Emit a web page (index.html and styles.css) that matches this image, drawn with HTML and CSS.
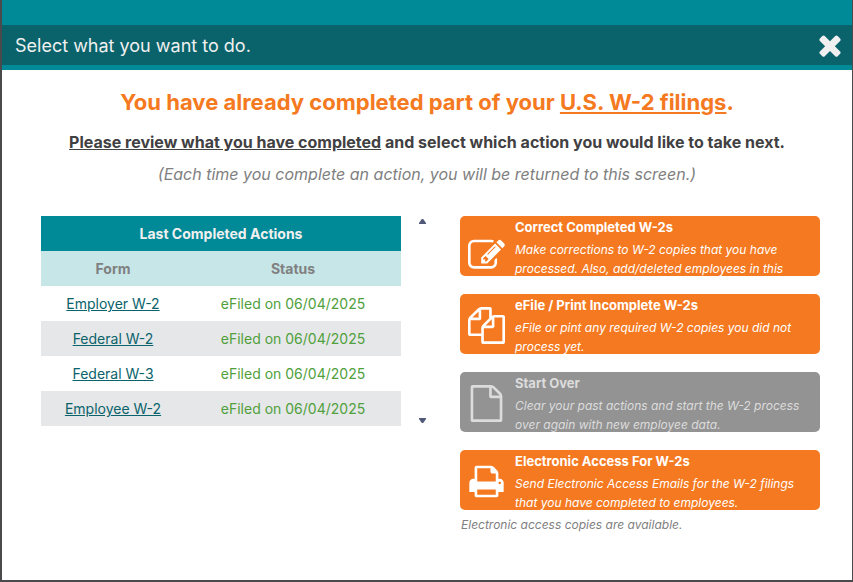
FILE: index.html
```html
<!DOCTYPE html>
<html lang="en">
<head>
	<meta charset="utf-8">
	<meta name="viewport" content="width=device-width, initial-scale=1">
	<title>Select what you want to do.</title>
	<link rel="stylesheet" href="styles.css">
</head>
<body>

	<div class="dialog">
		<header class="dialog-header">
			<div class="title-bar">
				<h1>Select what you want to do.</h1>
				<button type="button" class="close" aria-label="Close">
					<svg viewBox="0 0 1792 1792"><path d="M1490 1322q0 40-28 68l-136 136q-28 28-68 28t-68-28l-294-294-294 294q-28 28-68 28t-68-28l-136-136q-28-28-28-68t28-68l294-294-294-294q-28-28-28-68t28-68l136-136q28-28 68-28t68 28l294 294 294-294q28-28 68-28t68 28l136 136q28 28 28 68t-28 68l-294 294 294 294q28 28 28 68z"/></svg>
				</button>
			</div>
		</header>

		<main>
			<div class="intro">
				<h2>You have already completed part of your <u>U.S. W-2 filings</u>.</h2>
				<p class="review"><u>Please review what you have completed</u> and select which action you would like to take next.</p>
				<p class="note">(Each time you complete an action, you will be returned to this screen.)</p>
			</div>

			<div class="columns">
				<div class="completed">
					<table>
						<thead>
							<tr class="caption"><th colspan="2">Last Completed Actions</th></tr>
							<tr class="labels"><th>Form</th><th>Status</th></tr>
						</thead>
						<tbody>
							<tr><td><a href="#">Employer W-2</a></td><td>eFiled on 06/04/2025</td></tr>
							<tr><td><a href="#">Federal W-2</a></td><td>eFiled on 06/04/2025</td></tr>
							<tr><td><a href="#">Federal W-3</a></td><td>eFiled on 06/04/2025</td></tr>
							<tr><td><a href="#">Employee W-2</a></td><td>eFiled on 06/04/2025</td></tr>
						</tbody>
					</table>
					<div class="scroll">
						<button type="button" class="up" aria-label="Scroll up"></button>
						<button type="button" class="down" aria-label="Scroll down"></button>
					</div>
				</div>

				<div class="actions">
					<button type="button" class="action edit">
						<svg viewBox="0 0 1792 1792"><path d="M888 1184l116-116-152-152-116 116v56h96v96h56zm440-720q-16-16-33 1l-350 350q-17 17-1 33t33-1l350-350q17-17 1-33zm80 594v190q0 119-84.5 203.5t-203.5 84.5h-832q-119 0-203.5-84.5t-84.5-203.5v-832q0-119 84.5-203.5t203.5-84.5h832q63 0 117 25 15 7 18 23 3 17-9 29l-49 49q-14 14-32 8-23-6-45-6h-832q-66 0-113 47t-47 113v832q0 66 47 113t113 47h832q66 0 113-47t47-113v-126q0-13 9-22l64-64q15-15 35-7t20 29zm-96-738l288 288-672 672h-288v-288zm444 132l-92 92-288-288 92-92q28-28 68-28t68 28l152 152q28 28 28 68t-28 68z"/></svg>
						<span class="text">
							<b>Correct Completed W-2s</b>
							<i>Make corrections to W-2 copies that you have processed. Also, add/deleted employees in this</i>
						</span>
					</button>
					<button type="button" class="action">
						<svg viewBox="0 0 1792 1792"><path d="M1696 384q40 0 68 28t28 68v1216q0 40-28 68t-68 28h-960q-40 0-68-28t-28-68v-288h-544q-40 0-68-28t-28-68v-672q0-40 20-88t48-76l408-408q28-28 76-48t88-20h416q40 0 68 28t28 68v328q68-40 128-40h416zm-544 213l-299 299h299v-299zm-640-384l-299 299h299v-299zm196 647l316-316v-416h-384v416q0 40-28 68t-68 28h-416v640h512v-256q0-40 20-88t48-76zm956 804v-1152h-384v416q0 40-28 68t-68 28h-416v640h896z"/></svg>
						<span class="text">
							<b>eFile / Print Incomplete W-2s</b>
							<i>eFile or pint any required W-2 copies you did not process yet.</i>
						</span>
					</button>
					<button type="button" class="action" disabled>
						<svg viewBox="0 0 1792 1792"><path d="M1596 380q28 28 48 76t20 88v1152q0 40-28 68t-68 28h-1344q-40 0-68-28t-28-68v-1600q0-40 28-68t68-28h896q40 0 88 20t76 48zm-444-244v376h376q-10-29-22-41l-313-313q-12-12-41-22zm384 1528v-1024h-416q-40 0-68-28t-28-68v-416h-768v1536h1280z"/></svg>
						<span class="text">
							<b>Start Over</b>
							<i>Clear your past actions and start the W-2 process over again with new employee data.</i>
						</span>
					</button>
					<button type="button" class="action">
						<svg viewBox="0 0 1792 1792"><path d="M448 1536h896v-256h-896v256zm0-640h896v-384h-160q-40 0-68-28t-28-68v-160h-640v640zm1152 64q0-26-19-45t-45-19-45 19-19 45 19 45 45 19 45-19 19-45zm128 0v416q0 13-9.5 22.5t-22.5 9.5h-224v160q0 40-28 68t-68 28h-960q-40 0-68-28t-28-68v-160h-224q-13 0-22.5-9.5t-9.5-22.5v-416q0-79 56.5-135.5t135.5-56.5h64v-544q0-40 28-68t68-28h672q40 0 88 20t76 48l152 152q28 28 48 76t20 88v256h64q79 0 135.5 56.5t56.5 135.5z"/></svg>
						<span class="text">
							<b>Electronic Access For W-2s</b>
							<i>Send Electronic Access Emails for the W-2 filings that you have completed to employees.</i>
						</span>
					</button>
					<p class="available">Electronic access copies are available.</p>
				</div>
			</div>
		</main>
	</div>

</body>
</html>
```
FILE: styles.css
```css
*{
	margin:0;
	padding:0;
	box-sizing:border-box;
}
body{
	font-family:Inter, "Liberation Sans", sans-serif;
	font-size:14px;
	background:#4a4a4c;
}
button{
	border:0;
	background:none;
	font-family:inherit;
	cursor:pointer;
}
svg{
	display:block;
	fill:currentColor;
}

.dialog{
	min-height:100vh;
	border:solid #4a4a4c;
	border-width:0 1px 2px 2px;
	background:#fff;
}
.dialog-header{
	padding:25px 0 5px;
	background:#008996;
}
.title-bar{
	display:flex;
	align-items:center;
	justify-content:space-between;
	height:40px;
	padding:0 6px 0 13px;
	background:#0a636b;
	color:#f0f0f0;
}
.title-bar h1{
	font-size:18px;
	font-weight:400;
}
.close{
	color:#f0f0f0;
}
.close svg{
	width:32px;
	height:32px;
}

main{
	padding:16px 0 20px;
}
.intro{
	text-align:center;
}
.intro h2{
	font-size:22px;
	line-height:32px;
	font-weight:700;
	color:#f57920;
}
.review{
	margin-top:14px;
	font-size:16px;
	line-height:20px;
	font-weight:700;
	color:#414042;
}
.note{
	margin-top:12px;
	font-size:16px;
	line-height:20px;
	font-style:italic;
	color:#808080;
}

.columns{
	display:grid;
	grid-template-columns:1fr 360px;
	gap:30px;
	margin-top:32px;
	padding:0 32px 0 39px;
}
.completed{
	display:flex;
	align-items:flex-start;
	gap:14px;
}
table{
	flex:1;
	border-collapse:collapse;
	table-layout:fixed;
	text-align:center;
}
th,td{
	width:60%;
	height:35px;
}
th:first-child,td:first-child{
	width:40%;
}
.caption{
	background:#008996;
	color:#f0f0f0;
}
.labels{
	background:#c7e6e8;
	color:#808080;
}
th{
	font-weight:700;
}
td{
	color:#50a03c;
}
td a{
	color:#0a636b;
}
tbody tr:nth-child(even){
	background:#e6e7e8;
}
.scroll{
	display:flex;
	flex-direction:column;
	justify-content:space-between;
	align-items:center;
	width:15px;
	height:210px;
	padding:3px 0;
}
.up,.down{
	width:7px;
	height:5px;
	background:#505a78;
}
.up{
	clip-path:polygon(40% 0, 60% 0, 100% 80%, 100% 100%, 0 100%, 0 80%);
}
.down{
	clip-path:polygon(0 0, 100% 0, 100% 20%, 60% 100%, 40% 100%, 0 20%);
}

.actions{
	display:flex;
	flex-direction:column;
	gap:18px;
}
.action{
	display:flex;
	align-items:flex-start;
	gap:10px;
	height:60px;
	padding:0 8px;
	border-radius:5px;
	overflow:hidden;
	background:#f57920;
	color:#fff;
	text-align:left;
}
.action:disabled{
	background:#939393;
	color:#dcdcdc;
	cursor:default;
}
.action svg{
	flex:none;
	width:37px;
	height:37px;
	margin-top:13px;
}
.action.edit svg{
	margin-top:21px;
}
.action b{
	display:block;
	margin-bottom:2px;
	font-size:13px;
	line-height:22px;
	font-weight:700;
}
.action i{
	display:block;
	font-size:12px;
	line-height:19px;
}
.available{
	margin-top:-11px;
	padding-left:1px;
	font-size:12px;
	line-height:16px;
	font-style:italic;
	color:#808080;
}
```
